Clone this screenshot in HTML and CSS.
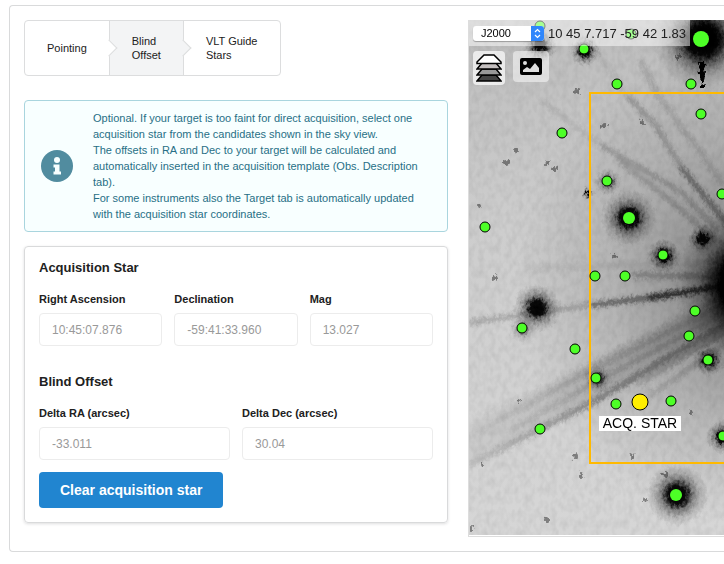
FILE: index.html
```html
<!DOCTYPE html>
<html lang="en">
<head>
    <meta charset="UTF-8">
    <title>Blind Offset</title>
    <link rel="stylesheet" href="styles.css">
</head>
<body>
    <main class="panel">
        <div class="left-column">
            <nav class="steps">
                <a class="step" href="#pointing">Pointing</a>
                <a class="step active" href="#offset">Blind<br>Offset</a>
                <a class="step" href="#guide">VLT Guide<br>Stars</a>
            </nav>

            <div class="message">
                <svg class="info-icon" viewBox="0 0 32 32">
                    <circle cx="16" cy="16" r="16" fill="#518c9f"/>
                    <circle cx="16" cy="10" r="3" fill="#f8ffff"/>
                    <path d="M12.5 14.500h6v7h1.500v3h-7.500v-3h1.500v-4h-1.500z" fill="#f8ffff"/>
                </svg>
                <div class="message-text">
                    Optional. If your target is too faint for direct acquisition, select one acquisition star from the candidates shown in the sky view.<br>
                    The offsets in RA and Dec to your target will be calculated and automatically inserted in the acquisition template (Obs. Description tab).<br>
                    For some instruments also the Target tab is automatically updated with the acquisition star coordinates.
                </div>
            </div>

            <form class="segment">
                <h4>Acquisition Star</h4>
                <div class="fields">
                    <div class="field">
                        <label for="ra">Right Ascension</label>
                        <input id="ra" type="text" value="10:45:07.876" disabled>
                    </div>
                    <div class="field">
                        <label for="dec">Declination</label>
                        <input id="dec" type="text" value="-59:41:33.960" disabled>
                    </div>
                    <div class="field">
                        <label for="mag">Mag</label>
                        <input id="mag" type="text" value="13.027" disabled>
                    </div>
                </div>
                <h4 class="second">Blind Offset</h4>
                <div class="fields">
                    <div class="field">
                        <label for="dra">Delta RA (arcsec)</label>
                        <input id="dra" type="text" value="-33.011" disabled>
                    </div>
                    <div class="field">
                        <label for="ddec">Delta Dec (arcsec)</label>
                        <input id="ddec" type="text" value="30.04" disabled>
                    </div>
                </div>
                <button class="clear" type="button">Clear acquisition star</button>
            </form>
        </div>

        <div class="sky">
            <svg class="sky-image" viewBox="1 0 255 515">
                <defs>
                    <linearGradient id="base" x1="0" y1="0" x2="0" y2="1">
                        <stop offset="0" stop-color="#bcbcbc"/>
                        <stop offset="0.4" stop-color="#cdcdcd"/>
                        <stop offset="1" stop-color="#d6d6d6"/>
                    </linearGradient>
                    <linearGradient id="ray" gradientUnits="userSpaceOnUse" x1="0" y1="0" x2="256" y2="0">
                        <stop offset="0" stop-color="#000" stop-opacity="0.25"/>
                        <stop offset="0.5" stop-color="#000" stop-opacity="0.8"/>
                        <stop offset="1" stop-color="#000" stop-opacity="1"/>
                    </linearGradient>
                    <radialGradient id="glow" gradientUnits="userSpaceOnUse" cx="288" cy="264" r="240">
                        <stop offset="0" stop-color="#000"/>
                        <stop offset="0.15" stop-color="#000"/>
                        <stop offset="0.24" stop-color="#000" stop-opacity="0.5"/>
                        <stop offset="0.34" stop-color="#000" stop-opacity="0.26"/>
                        <stop offset="0.6" stop-color="#000" stop-opacity="0.13"/>
                        <stop offset="1" stop-color="#000" stop-opacity="0"/>
                    </radialGradient>
                    <radialGradient id="blob">
                        <stop offset="0" stop-color="#000"/>
                        <stop offset="0.3" stop-color="#000" stop-opacity="0.95"/>
                        <stop offset="0.5" stop-color="#000" stop-opacity="0.4"/>
                        <stop offset="0.75" stop-color="#000" stop-opacity="0.13"/>
                        <stop offset="1" stop-color="#000" stop-opacity="0"/>
                    </radialGradient>
                    <filter id="jag" filterUnits="userSpaceOnUse" x="-20" y="-20" width="320" height="560" color-interpolation-filters="sRGB">
                        <feTurbulence type="fractalNoise" baseFrequency="0.35 0.25" numOctaves="2" seed="4" result="n"/>
                        <feDisplacementMap in="SourceGraphic" in2="n" scale="8" xChannelSelector="R" yChannelSelector="G"/>
                    </filter>
                    <filter id="soft" filterUnits="userSpaceOnUse" x="-20" y="-20" width="320" height="560" color-interpolation-filters="sRGB">
                        <feGaussianBlur stdDeviation="2" result="b"/>
                        <feTurbulence type="fractalNoise" baseFrequency="0.35 0.25" numOctaves="2" seed="9" result="n"/>
                        <feDisplacementMap in="b" in2="n" scale="7" xChannelSelector="R" yChannelSelector="G"/>
                    </filter>
                    <filter id="grain" x="0" y="0" width="100%" height="100%" color-interpolation-filters="sRGB">
                        <feTurbulence type="fractalNoise" baseFrequency="0.18 0.12" numOctaves="2" seed="2"/>
                        <feColorMatrix values="0 0 0 0 0  0 0 0 0 0  0 0 0 0 0  0.5 0 0 0 -0.18"/>
                    </filter>
                </defs>

                <rect width="256" height="515" fill="url(#base)"/>
                <rect x="-20" y="-20" width="320" height="560" fill="url(#glow)" filter="url(#jag)"/>
                <rect width="256" height="515" filter="url(#grain)" opacity="0.25"/>

                <!-- diffraction rays -->
                <g filter="url(#soft)" stroke="#000" fill="none">
                    <path d="M127 30L160 77" stroke-width="4" opacity="0.08"/>
                    <path d="M160 77L187 104L213 147" stroke-width="5" opacity="0.22"/>
                    <path d="M213 147L262 208" stroke-width="5" opacity="0.45"/>
                    <path d="M172 40L190 75L256 165" stroke-width="5" opacity="0.14"/>
                    <path d="M73 81L133 125" stroke-width="4" opacity="0.1"/>
                    <path d="M133 125L213 172L250 210" stroke-width="4" opacity="0.24"/>
                    <path d="M150 140L200 178L250 222" stroke-width="5" opacity="0.18"/>
                    <path d="M0 303L67 293L123 285" stroke-width="4" opacity="0.24"/>
                    <path d="M123 285L180 278" stroke-width="4" opacity="0.6"/>
                    <path d="M180 278L262 265" stroke-width="5" opacity="0.9"/>
                    <path d="M60 248L262 242" stroke-width="6" opacity="0.06"/>
                    <path d="M165 255L262 257" stroke-width="6" opacity="0.25"/>
                </g>
                <g filter="url(#soft)" fill="url(#ray)">
                    <path d="M264 268L123 342L-4 405V452L123 386L264 312z" opacity="0.14"/>
                    <path d="M264 277L123 348L0 415V420L123 353L264 285z" opacity="0.2"/>
                    <path d="M264 286L123 362L40 410V414L123 367L264 293z" opacity="0.22"/>
                    <path d="M264 296L123 380L0 443V448L123 386L264 304z" opacity="0.36"/>
                    <path d="M264 306L170 363V367L264 312z" opacity="0.25"/>
                    <path d="M264 316L180 375V379L264 322z" opacity="0.2"/>
                </g>

                <!-- stars on the plate -->
                <g filter="url(#jag)" fill="url(#blob)">
                    <circle cx="235" cy="20" r="50"/>
                    <circle cx="237" cy="18" r="34"/>
                    <path d="M231 42h5l1 12-2 14h-2z" fill="#000"/>
                    <circle cx="72" cy="25" r="17"/>
                    <circle cx="117" cy="31" r="15"/>
                    <circle cx="140" cy="162" r="13" opacity="0.6"/>
                    <circle cx="161" cy="198" r="28"/>
                    <circle cx="196" cy="236" r="17"/>
                    <circle cx="235" cy="219" r="15"/>
                    <circle cx="69" cy="288" r="24"/>
                    <circle cx="130" cy="359" r="14" opacity="0.7"/>
                    <circle cx="241" cy="340" r="16"/>
                    <circle cx="55" cy="309" r="14" opacity="0.4"/>
                    <circle cx="209" cy="475" r="31"/>
                    <circle cx="255" cy="417" r="17"/>
                    <circle cx="120" cy="173" r="6"/>
                </g>
                <g filter="url(#jag)" fill="#000" opacity="0.4">
                    <ellipse cx="109" cy="71" rx="3" ry="3"/>
                    <ellipse cx="38" cy="143" rx="3" ry="3"/>
                    <ellipse cx="48" cy="131" rx="2" ry="3"/>
                    <ellipse cx="79" cy="143" rx="2" ry="2"/>
                    <ellipse cx="86" cy="149" rx="3" ry="2"/>
                    <ellipse cx="136" cy="106" rx="3" ry="3"/>
                    <ellipse cx="174" cy="102" rx="2" ry="3"/>
                    <ellipse cx="210" cy="37" rx="3" ry="2"/>
                    <ellipse cx="26" cy="258" rx="3" ry="3"/>
                    <ellipse cx="146" cy="236" rx="2" ry="2"/>
                    <ellipse cx="12" cy="186" rx="2" ry="2"/>
                    <ellipse cx="14" cy="444" rx="2" ry="3"/>
                    <ellipse cx="107" cy="436" rx="3" ry="3"/>
                    <ellipse cx="113" cy="455" rx="2" ry="3"/>
                    <ellipse cx="164" cy="436" rx="2" ry="2"/>
                    <ellipse cx="198" cy="455" rx="3" ry="3"/>
                    <ellipse cx="177" cy="480" rx="2" ry="2"/>
                    <ellipse cx="79" cy="500" rx="3" ry="3"/>
                    <ellipse cx="3" cy="509" rx="2" ry="3"/>
                    <ellipse cx="51" cy="381" rx="2" ry="2"/>
                    <ellipse cx="223" cy="393" rx="2" ry="2"/>
                </g>

                <!-- field of view -->
                <rect x="122" y="73" width="300" height="370" fill="none" stroke="#ffb900" stroke-width="2"/>

                <!-- candidates -->
                <g fill="#4dff27" stroke="#000">
                    <circle cx="72" cy="6" r="5"/>
                    <circle cx="163" cy="14" r="5"/>
                    <circle cx="116" cy="29" r="5"/>
                    <circle cx="233" cy="19" r="8" stroke="none"/>
                    <circle cx="149" cy="64" r="5"/>
                    <circle cx="223" cy="64" r="5"/>
                    <circle cx="233" cy="94" r="5"/>
                    <circle cx="94" cy="113" r="5"/>
                    <circle cx="139" cy="161" r="5"/>
                    <circle cx="161" cy="198" r="6" stroke="none"/>
                    <circle cx="254" cy="174" r="5"/>
                    <circle cx="195" cy="235" r="5"/>
                    <circle cx="17" cy="207" r="5"/>
                    <circle cx="127" cy="256" r="5"/>
                    <circle cx="157" cy="256" r="5"/>
                    <circle cx="54" cy="308" r="5"/>
                    <circle cx="107" cy="329" r="5"/>
                    <circle cx="128" cy="358" r="5"/>
                    <circle cx="227" cy="291" r="5"/>
                    <circle cx="221" cy="316" r="5"/>
                    <circle cx="240" cy="340" r="5"/>
                    <circle cx="148" cy="384" r="5"/>
                    <circle cx="203" cy="381" r="5"/>
                    <circle cx="72" cy="409" r="5"/>
                    <circle cx="255" cy="416" r="5"/>
                    <circle cx="208" cy="475" r="6" stroke="none"/>
                    <circle cx="172" cy="382" r="8" fill="#ffee00"/>
                </g>
                <rect x="131" y="396" width="82" height="15" fill="#fff"/>
                <text class="star-label" x="172" y="408" text-anchor="middle">ACQ. STAR</text>
            </svg>

            <div class="location">
                <span class="frame">
                    <select aria-label="Frame">
                        <option>J2000</option>
                        <option>Galactic</option>
                    </select>
                    <svg class="frame-arrows" viewBox="0 0 13 15">
                        <path d="M0 0h10q3 0 3 3v9q0 3-3 3H0z" fill="#2f86fb"/>
                        <path d="M4 6l2.500-2.500L9 6M4 9l2.500 2.500L9 9" fill="none" stroke="#fff" stroke-width="1.200"/>
                    </svg>
                </span>
                <span class="coords">10 45 7.717 -59 42 1.83</span>
            </div>
            <div class="tools">
                <button class="tool layers" type="button" aria-label="Layers">
                    <svg width="26" height="28" viewBox="0 0 26 28" stroke="#000" stroke-width="1.500">
                        <path d="M6 21h14l5 6H1z" fill="#444"/>
                        <path d="M6 15h14l5 6H1z" fill="#999"/>
                        <path d="M6 9h14l5 6H1z" fill="#c4bfbf"/>
                        <path d="M8 1h10l7 7v1.500H1V8z" fill="#fff"/>
                    </svg>
                </button>
                <button class="tool picture" type="button" aria-label="Image">
                    <svg width="22" height="17" viewBox="0 0 22 17">
                        <rect width="22" height="17" rx="2" fill="#000"/>
                        <circle cx="5" cy="5" r="2" fill="#ddd"/>
                        <path d="M3 14v-2l4-3 3 2 5-6 4 5v4z" fill="#ddd"/>
                    </svg>
                </button>
            </div>
        </div>
    </main>
</body>
</html>
```
FILE: styles.css
```css
* {
    box-sizing: border-box;
}

body {
    margin: 0;
    padding: 5px 0 12px 9px;
    background: #fff;
    font-family: "Liberation Sans", Arial, sans-serif;
    font-size: 11px;
    color: #212121;
    overflow-x: hidden;
}

/* the panel runs on past the right edge */
.panel {
    display: grid;
    grid-template-columns: 53fr 32fr;
    gap: 20px;
    align-items: start;
    padding: 14px 0 14px 14px;
    border: 1px solid #d9dadb;
    border-right: none;
    border-radius: 4px 0 0 4px;
}

.steps {
    display: inline-flex;
    border: 1px solid #dcddde;
    border-radius: 4px;
    margin-bottom: 24px;
}

.step {
    position: relative;
    display: flex;
    align-items: center;
    min-height: 54px;
    padding: 0 22px;
    line-height: 14px;
    color: #212121;
    text-decoration: none;
    border-right: 1px solid #dcddde;
}

.step:last-child {
    border-right: none;
    border-radius: 0 4px 4px 0;
}

.step:not(:last-child)::after {
    content: "";
    position: absolute;
    z-index: 1;
    right: -6px;
    top: 50%;
    width: 11px;
    height: 11px;
    margin-top: -6px;
    background: #fff;
    border: solid #dcddde;
    border-width: 1px 1px 0 0;
    transform: rotate(45deg);
}

.step.active,
.step.active::after {
    background: #f3f4f5 !important;
}

.message {
    display: flex;
    align-items: center;
    gap: 20px;
    padding: 9px 20px 9px 16px;
    background: #f8ffff;
    border: 1px solid #a9d5de;
    border-radius: 4px;
    color: #276f86;
    line-height: 16px;
    margin-bottom: 14px;
}

.info-icon {
    flex: none;
    width: 32px;
    height: 32px;
}

.segment {
    padding: 14px;
    border: 1px solid #d9dadb;
    border-radius: 4px;
    box-shadow: 0 1px 3px rgba(34, 36, 38, 0.15);
}

h4 {
    margin: 0 0 16px;
    font-size: 13px;
    line-height: 14px;
}

h4.second {
    margin-top: 29px;
}

.fields {
    display: flex;
    gap: 12px;
}

.field {
    flex: 1;
    min-width: 0;
}

.field label {
    display: block;
    margin-bottom: 6px;
    line-height: 16px;
    font-weight: bold;
}

.field input {
    display: block;
    width: 100%;
    height: 33px;
    padding: 0 12px;
    border: 1px solid #ececec;
    border-radius: 4px;
    background: #fff;
    color: #999;
    font-family: inherit;
    font-size: 12px;
}

.clear {
    height: 36px;
    margin-top: 12px;
    padding: 0 21px;
    border: none;
    border-radius: 4px;
    background: #2185d0;
    color: #fff;
    font-family: inherit;
    font-size: 14px;
    font-weight: bold;
    display: block;
    cursor: pointer;
}

.sky {
    position: relative;
    border-left: 1px solid #ddd;
    border-bottom: 1px solid #ddd;
    padding-bottom: 1px;
}

.sky-image {
    display: block;
    width: 100%;
    height: auto;
}

.star-label {
    font-size: 14px;
    fill: #000;
}

.location {
    position: absolute;
    top: 0;
    left: 0;
    display: flex;
    align-items: center;
    gap: 4px;
    height: 26px;
    padding: 0 4px;
    background: rgba(255, 255, 255, 0.5);
}

.frame {
    position: relative;
    display: flex;
}

.frame select {
    appearance: none;
    width: 71px;
    height: 15px;
    padding: 0 8px;
    border: none;
    border-radius: 3px;
    background: #fff;
    box-shadow: 0 1px 1px rgba(0, 0, 0, 0.3);
    color: #000;
    font-family: inherit;
    font-size: 11px;
    line-height: 15px;
}

.frame-arrows {
    position: absolute;
    top: 0;
    right: 0;
    width: 13px;
    height: 15px;
    pointer-events: none;
}

.coords {
    font-size: 13px;
    white-space: nowrap;
}

.tools {
    position: absolute;
    top: 31px;
    left: 4px;
    display: flex;
    align-items: flex-start;
    gap: 8px;
}

.tool {
    display: flex;
    align-items: center;
    justify-content: center;
    padding: 0;
    border: none;
    border-radius: 4px;
}

.layers {
    width: 32px;
    height: 34px;
    background: rgba(255, 255, 255, 0.7);
}

.picture {
    width: 36px;
    height: 31px;
    background: rgba(255, 255, 255, 0.5);
}
```
